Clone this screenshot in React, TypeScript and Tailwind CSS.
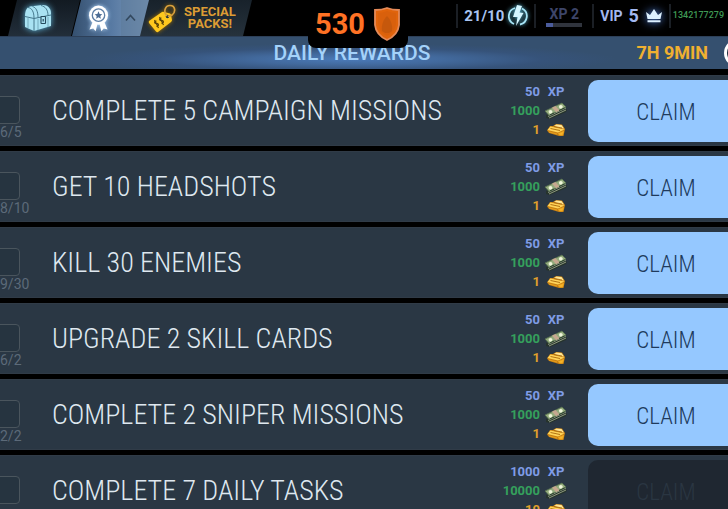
import type { ReactNode } from "react";

type Task = {
  title: string;
  progress: string;
  xp: number;
  cash: number;
  gold: number;
  ready: boolean;
};

const tasks: Task[] = [
  { title: "COMPLETE 5 CAMPAIGN MISSIONS", progress: "6/5", xp: 50, cash: 1000, gold: 1, ready: true },
  { title: "GET 10 HEADSHOTS", progress: "8/10", xp: 50, cash: 1000, gold: 1, ready: true },
  { title: "KILL 30 ENEMIES", progress: "9/30", xp: 50, cash: 1000, gold: 1, ready: true },
  { title: "UPGRADE 2 SKILL CARDS", progress: "6/2", xp: 50, cash: 1000, gold: 1, ready: true },
  { title: "COMPLETE 2 SNIPER MISSIONS", progress: "2/2", xp: 50, cash: 1000, gold: 1, ready: true },
  { title: "COMPLETE 7 DAILY TASKS", progress: "", xp: 1000, cash: 10000, gold: 10, ready: false },
];

function ChestIcon() {
  return (
    <svg width="28" height="28" viewBox="0 0 28 28" className="drop-shadow-[0_0_3px_#5fb4d8]" aria-hidden="true">
      <path d="M1 12C1 6 3 3.500 6 2.500L18 1C23 0.500 27 4 27 9V22L10 27L1 23Z" fill="#a9e2f2" />
      <path
        d="M1 12.500L10 14.500V27M10 14.500L27 11M10 14C10 8 8 4 4 3.500M14 13.500C14 7 12 3.500 8.500 2.500M24 11.500C24 6 21.500 2.500 17 1.500"
        fill="none"
        stroke="#3a6c80"
        strokeWidth="0.900"
      />
      <path d="M14 15V26M24 13V23M4 14V24" stroke="#5d93a8" strokeWidth="0.700" />
      <rect x="17" y="12.500" width="4.500" height="7" rx="0.500" fill="#a9e2f2" stroke="#254a5c" strokeWidth="1.100" />
      <path d="M19.200 15V17.500" stroke="#254a5c" strokeWidth="1.200" />
    </svg>
  );
}

function MedalIcon() {
  return (
    <svg width="21" height="28" viewBox="0 0 22 28" className="drop-shadow-[0_0_2px_#b8dcff]" aria-hidden="true">
      <path d="M5 18L1.500 26L5.500 25L8 28L10 20ZM17 18L20.500 26L16.500 25L14 28L12 20Z" fill="#fff" />
      <circle cx="11" cy="11" r="10" fill="#fff" />
      <circle cx="11" cy="11" r="6.500" fill="none" stroke="#5d7ea4" strokeWidth="1.400" />
      <path d="M11 7L12.200 9.700L15 10L12.900 11.900L13.500 14.700L11 13.200L8.500 14.700L9.100 11.900L7 10L9.800 9.700Z" fill="#4c6c93" />
    </svg>
  );
}

function TagIcon() {
  return (
    <svg width="28" height="29" viewBox="0 0 28 29" className="drop-shadow-[0_0_2px_#a87400]" aria-hidden="true">
      <path d="M1 17L14 8Q15 7.500 16 8L22 9.500Q23 10 23 11L24 16Q24 17 23 18L10 28Q9 28.500 8 27.500L1 19Q0.500 18 1 17Z" fill="#ffc81e" />
      <circle cx="19.500" cy="12.500" r="1.700" fill="#263238" />
      <path d="M19 12C15 8 17 1.500 22 1.500C27.500 1.500 28 8 24 11C22.500 12 21 12.500 20 12" fill="none" stroke="#d9a03c" strokeWidth="1.700" />
      <path
        d="M8.500 17C5.500 17 6.500 20 8.500 19.500S11.500 22 8.500 22.500M6.500 16L10.500 24M13.500 14C10.500 14 11.500 17 13.500 16.500S16.500 19 13.500 19.500M11.500 13L15.500 21"
        fill="none"
        stroke="#5c4508"
        strokeWidth="1.200"
      />
    </svg>
  );
}

function ShieldIcon() {
  return (
    <svg width="28" height="36" viewBox="0 0 28 36" aria-hidden="true">
      <path d="M2 4Q9 4 14 2Q19 4 26 4V19Q25 29 14 34Q3 29 2 19Z" fill="#e0640c" stroke="#e58a58" strokeWidth="1.800" />
      <path d="M5 7Q10 7 14 5Q18 7 23 7V18Q22 26 14 30Q6 26 5 18Z" fill="#d9600c" />
      <path d="M9 25C8 18 11 13 14 10C17 13 20 18 19 25L16 27H12Z" fill="#c6580c" />
    </svg>
  );
}

function EnergyIcon() {
  return (
    <svg width="20" height="22" viewBox="0 0 20 22" className="drop-shadow-[0_0_2px_#62c8e8]" aria-hidden="true">
      <path d="M7 3A8.500 8.500 0 0 0 6 19M14 3.500A8.500 8.500 0 0 1 12 19.500" fill="none" stroke="#a6e4f6" strokeWidth="1.800" />
      <path d="M9 0L14 1L11.500 7.500L15.500 8L8 21L9.500 12L5 12Z" fill="#d4f5ff" />
    </svg>
  );
}

function CrownIcon() {
  return (
    <svg width="18" height="14" viewBox="0 0 18 14" className="drop-shadow-[0_0_5px_#5b96ff]" aria-hidden="true">
      <path d="M1 3L5 6L9 0L13 6L17 3L15.500 10H2.500ZM2.500 11.200H15.500V13.200H2.500Z" fill="#dcf0ff" />
    </svg>
  );
}

function CashIcon() {
  return (
    <svg width="24" height="18" viewBox="0 0 24 18" aria-hidden="true">
      <path d="M2 13L20 5L23 8L22 10L6 17L2 16Z" fill="#26332c" />
      <path d="M5 16L22 8M4 14.500L22 6" stroke="#9aa588" strokeWidth="0.900" />
      <path d="M1 9L18 1L22 5L5 13.500Z" fill="#93ab7c" stroke="#55704f" strokeWidth="0.800" />
      <path d="M8 5.500L11.500 4L15.500 8.500L12 10.300Z" fill="#c6a890" />
      <circle cx="6.500" cy="9.800" r="1.900" fill="#eef5da" />
      <circle cx="16.800" cy="4.800" r="1.900" fill="#eef5da" />
      <path d="M6 12.800L10 11M15 8.500L20.500 6" stroke="#2f4732" strokeWidth="1" />
    </svg>
  );
}

function GoldIcon() {
  return (
    <svg width="20" height="14" viewBox="0 0 20 14" aria-hidden="true">
      <path d="M1 7.500L4 3L7 3L10 1L16 1.500L19 6L17.500 13L13 13L3 10Z" fill="#c98012" />
      <path d="M1.500 7L4.500 3.500L16 6L18.500 6.500L12 9.500Z" fill="#ffd45a" />
      <path d="M8 3L10.500 1.500L15.500 2L18 5.500L14 5Z" fill="#ffe694" />
      <path d="M4.500 5.500L14 7.500M8 3.500L16 5" stroke="#a8660a" strokeWidth="0.900" />
      <path d="M3 9L11 11M12.500 10.500L17.500 8.500L16.500 12H13.500Z" fill="#f5b52c" stroke="#f0a820" strokeWidth="0.800" />
    </svg>
  );
}

const slant = "[clip-path:polygon(9px_0,100%_0,calc(100%-9px)_100%,0_100%)]";

function Tab({ className, label, children }: { className: string; label: string; children: ReactNode }) {
  return (
    <button type="button" aria-label={label} className={`flex h-full shrink-0 items-center ${slant} ${className}`}>
      {children}
    </button>
  );
}

function Divider() {
  return <span className="h-6 w-0.5 shrink-0 bg-[#1b1f25]" />;
}

function TopBar() {
  return (
    <header className="relative z-10 flex h-9 justify-between bg-black">
      <nav className="flex h-full pl-2">
        <Tab label="Supplies" className="w-18 bg-linear-to-b from-[#121a22] to-[#222e3a] pl-4">
          <ChestIcon />
        </Tab>
        <Tab label="Daily rewards" className="-ml-2 w-20 bg-linear-to-r from-[#35506f] via-[#587aa3] to-[#86a0bc] pl-4">
          <MedalIcon />
          <span className="ml-3 flex h-full flex-1 items-center bg-[#5d7b9b]/60 pl-1">
            <svg width="11" height="8" viewBox="0 0 11 8" aria-hidden="true">
              <path d="M1 6.500L5.500 1.500L10 6.500" fill="none" stroke="#33485e" strokeWidth="1.600" />
            </svg>
          </span>
        </Tab>
        <Tab label="Special packs" className="-ml-3 w-28 gap-2 bg-linear-to-b from-[#18222b] to-[#26323c] pl-2">
          <TagIcon />
          <span className="flex flex-col text-center text-[13px] leading-3 font-bold text-[#dc9c34]">
            <span>SPECIAL</span>
            <span>PACKS!</span>
          </span>
        </Tab>
      </nav>

      <div className="absolute top-0 left-1/2 flex h-12 w-25 -translate-x-14 items-center justify-center gap-2 rounded-b-lg bg-black">
        <span className="text-[29px] leading-8 font-bold text-[#ff7224]">530</span>
        <ShieldIcon />
      </div>

      <div className="-mr-3 flex h-8 items-center gap-1.5 text-[15px] font-bold text-[#a9c4f0]">
        <Divider />
        <span className="flex items-center gap-1">
          21/10
          <EnergyIcon />
        </span>
        <Divider />
        <span className="mx-1 flex w-9 flex-col gap-px text-[#3d4569]">
          <span className="text-center text-sm leading-4">XP 2</span>
          <span className="h-1 bg-[#30343d]">
            <span className="block h-full w-1/5 bg-[#4b5c9c]" />
          </span>
        </span>
        <Divider />
        <span className="flex items-center gap-1.5 text-sm text-[#a3b8f0]">
          VIP <span className="text-lg">5</span>
          <CrownIcon />
        </span>
        <Divider />
        <span className="-ml-1 flex items-center gap-1 text-[9px] font-medium text-[#3f9a55]">
          1342177279
          <span className="size-3 rounded-full bg-[#57b868]" />
        </span>
      </div>
    </header>
  );
}

function TaskRow({ task, index }: { task: Task; index: number }) {
  const id = `task-${index}`;
  return (
    <li className="flex h-[71px] shrink-0 items-center border-y border-[#303b47] bg-[#2a3744]">
      <div className="w-13 shrink-0 self-start pt-5">
        <input
          id={id}
          type="checkbox"
          aria-label={task.title}
          className="-ml-2 block h-7 w-7 appearance-none rounded-sm border border-[#4a555d] bg-[#263440]"
        />
        <span className="block text-sm leading-4 text-[#5c6a79]">{task.progress}</span>
      </div>
      <label
        htmlFor={id}
        className="flex-1 font-['Roboto_Condensed',Roboto,sans-serif] text-[28px] leading-8 font-light whitespace-nowrap text-[#dfe8f0]"
      >
        {task.title}
      </label>
      <div className="grid shrink-0 grid-cols-[auto_24px] items-center gap-x-1 pr-5 text-right text-[13px] leading-[19px] font-bold">
        <span className="text-[#7f9ce6]">{task.xp}</span>
        <span className="text-center text-[#7f9ce6]">XP</span>
        <span className="text-[#35a05c]">{task.cash}</span>
        <CashIcon />
        <span className="text-[#e0a02c]">{task.gold}</span>
        <span className="flex justify-center">
          <GoldIcon />
        </span>
      </div>
      <button
        type="button"
        disabled={!task.ready}
        className="-mr-4 h-[62px] w-39 shrink-0 rounded-[10px] bg-[#95c8ff] pt-1 font-['Roboto_Condensed',Roboto,sans-serif] text-[23px] leading-8 font-light text-[#203a5c] disabled:bg-[#1f2731] disabled:text-[#2a3642]"
      >
        CLAIM
      </button>
    </li>
  );
}

export default function App() {
  return (
    <div className="h-screen overflow-hidden bg-black font-[Roboto,sans-serif]">
      <TopBar />
      <div className="mb-1.5 flex h-[33px] items-center border-t border-[#2d4059] bg-[radial-gradient(ellipse_at_48%_70%,#4a7ab8_0%,#42699c_18%,#36537a_36%,#35506f_50%,#35506f_100%)]">
        <span className="flex-1" />
        <h1 className="pr-12 text-[21px] leading-7 font-medium text-[#a4d2fa]">DAILY REWARDS</h1>
        <div className="-mr-6 flex flex-1 items-center justify-end gap-4 text-lg font-bold text-[#f0b030]">
          7H 9MIN
          <span className="size-7 rounded-full border-3 border-white bg-[#1c2a3a]" />
        </div>
      </div>
      <ul className="flex flex-col gap-[5px]">
        {tasks.map((task, i) => (
          <TaskRow key={task.title} task={task} index={i} />
        ))}
      </ul>
    </div>
  );
}
